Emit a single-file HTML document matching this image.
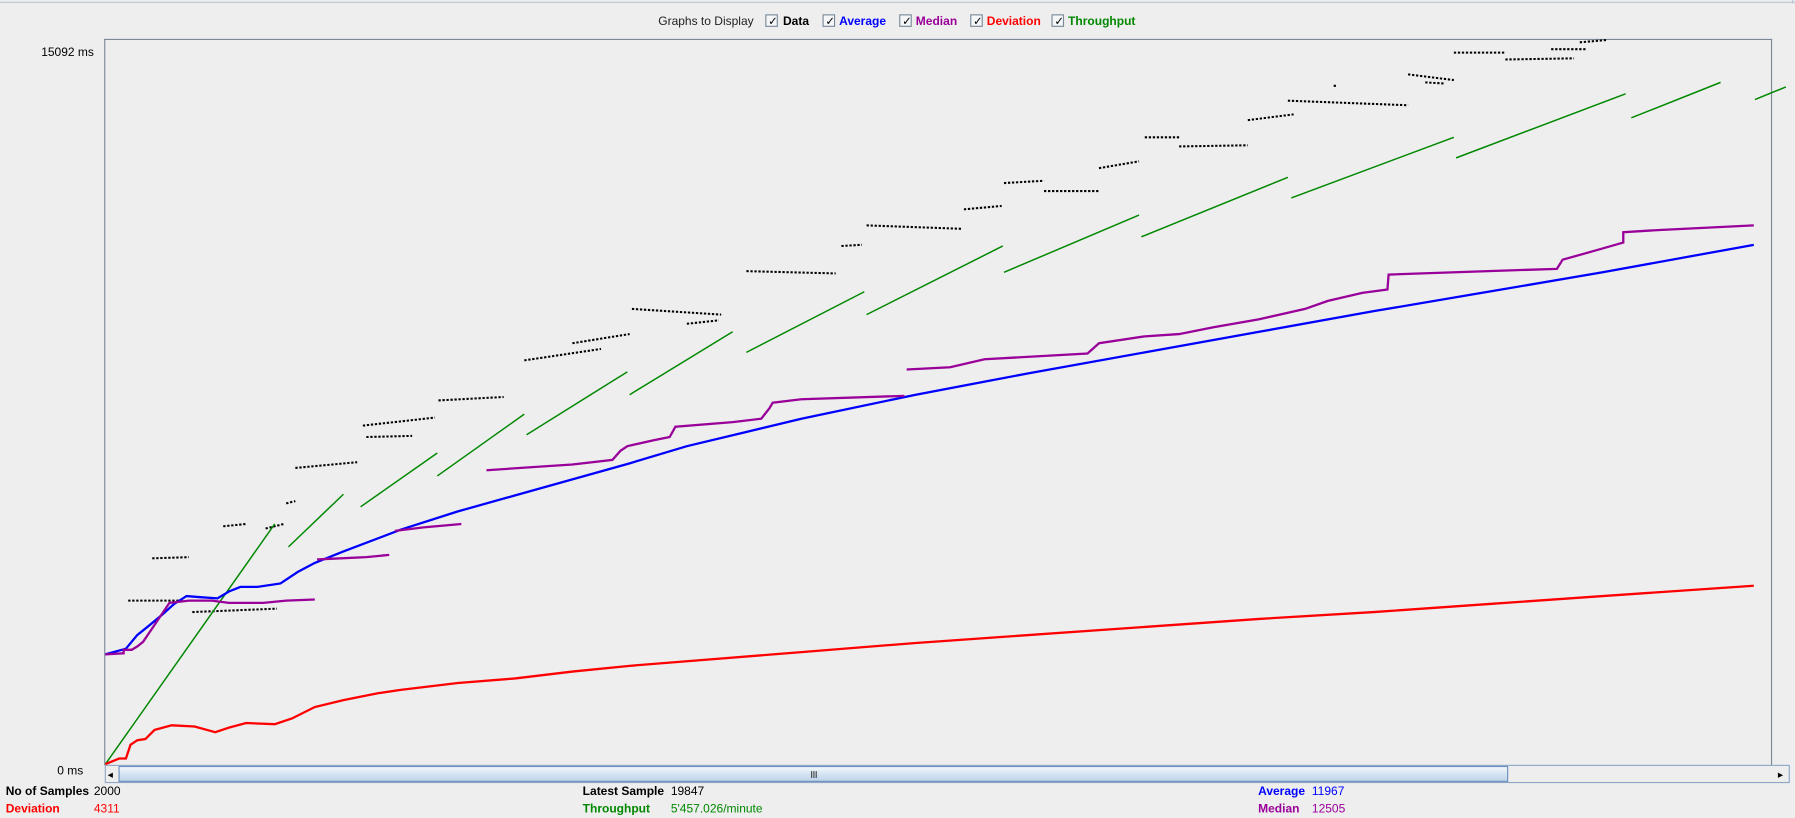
<!DOCTYPE html>
<html><head><meta charset="utf-8"><style>
html,body{margin:0;padding:0;background:#eeeeee;width:1795px;height:818px;overflow:hidden}
svg{display:block}
text{font-family:"Liberation Sans",sans-serif;font-size:10.5px}
</style></head><body>
<svg width="1795" height="818" viewBox="0 0 1568 715" preserveAspectRatio="none">
<defs><linearGradient id="sb" x1="0" y1="0" x2="0" y2="1"><stop offset="0" stop-color="#f4f8fc"/><stop offset="0.5" stop-color="#d6e4f2"/><stop offset="1" stop-color="#bcd2e8"/></linearGradient></defs>
<rect x="0" y="0" width="1568" height="715" fill="#eeeeee"/>
<line x1="0" y1="2" x2="1568" y2="2" stroke="#b8c4d0"/>
<line x1="1566" y1="0" x2="1566" y2="3" stroke="#b8c4d0"/>
<text x="575" y="22" fill="#222">Graphs to Display</text>
<g stroke="#7a8a99" fill="#f4f6f8"><rect x="669" y="13" width="10" height="10"/><rect x="719" y="13" width="10" height="10"/><rect x="786" y="13" width="10" height="10"/><rect x="848" y="13" width="10" height="10"/><rect x="919" y="13" width="10" height="10"/></g>
<g fill="#000"><text x="671" y="22" style="font-size:10px">✓</text><text x="721" y="22" style="font-size:10px">✓</text><text x="788" y="22" style="font-size:10px">✓</text><text x="850" y="22" style="font-size:10px">✓</text><text x="921" y="22" style="font-size:10px">✓</text></g>
<text x="684" y="22" fill="#000" style="font-weight:bold">Data</text>
<text x="733" y="22" fill="#0000ff" style="font-weight:bold">Average</text>
<text x="800" y="22" fill="#990099" style="font-weight:bold">Median</text>
<text x="862" y="22" fill="#ff0000" style="font-weight:bold">Deviation</text>
<text x="933" y="22" fill="#008800" style="font-weight:bold">Throughput</text>
<line x1="91.5" y1="34" x2="91.5" y2="669" stroke="#7a8898"/>
<line x1="91" y1="34.5" x2="1548" y2="34.5" stroke="#7a8898"/>
<line x1="1547.5" y1="34" x2="1547.5" y2="669" stroke="#7a8898"/>
<text x="36" y="49" fill="#000">15092  ms</text>
<text x="50" y="677" fill="#000">0  ms</text>
<g stroke="#000" stroke-width="1.8" stroke-dasharray="2 1.5" fill="none">
<path d="M112 525L160 525M133 488L165 487M168 535L242 532M195 460L215 458M232 462L248 458M250 440L258 438M258 409L312 404M317 372L380 365M320 382L360 381M383 350L440 347M458 315L525 305M500 300L550 292M552 270L630 275M600 283L628 280M652 237L730 239M735 215L753 214M757 197L840 200M842 183L875 180M877 160L912 158M912 167L960 167M960 147L995 141M1000 120L1030 120M1030 128L1090 127M1090 105L1130 100M1125 88L1230 92M1165 75L1168 75M1230 65L1270 70M1245 72L1262 73M1270 46L1315 46M1315 52L1375 51M1355 43L1385 43M1380 37L1403 35"/>
</g>
<g stroke="#008800" stroke-width="1.3" fill="none">
<path d="M92 668L240 458M252 478L300 432M315 443L382 396M382 416L458 362M460 380L548 325M550 345L640 290M652 308L755 255M757 275L876 215M877 238L995 188M997 207L1125 155M1128 173L1270 120M1272 138L1420 82M1425 103L1503 72M1533 87L1560 76"/>
</g>
<polyline fill="none" stroke="#ff0000" stroke-width="2" points="92,668 104,663 110,663 114,651 120,647 127,646 135,638 150,634 170,635 188,640 200,636 215,632 240,633 255,628 275,618 300,612 330,606 350,603 400,597 450,593 500,587 550,582 600,578 700,570 800,562 900,555 1000,548 1100,541 1200,535 1300,528 1400,521 1532,512"/>
<polyline fill="none" stroke="#0000ff" stroke-width="2" points="92,572 110,567 120,555 130,547 142,537 152,528 163,521 175,522 190,523 200,517 210,513 225,513 245,510 260,500 275,492 300,482 350,463 400,447 450,433 500,419 550,405 600,390 650,378 700,366 800,345 900,326 1000,308 1100,290 1200,272 1300,255 1400,238 1532,214"/>
<polyline fill="none" stroke="#990099" stroke-width="2" points="92,572 108,571 108,568 115,568 120,565 125,561 148,527 165,525 185,525 200,527 230,527 250,525 275,524"/>
<polyline fill="none" stroke="#990099" stroke-width="2" points="277,489 320,487 340,485"/>
<polyline fill="none" stroke="#990099" stroke-width="2" points="345,464 370,461 403,458"/>
<polyline fill="none" stroke="#990099" stroke-width="2" points="425,411 470,408 500,406 535,402 542,394 548,390 570,385 585,382 590,373 640,369 665,366 672,357 675,352 700,349 790,346"/>
<polyline fill="none" stroke="#990099" stroke-width="2" points="792,323 830,321 860,314 950,309 960,300 1000,294 1030,292 1060,286 1100,279 1140,270 1160,263 1190,256 1212,253 1213,240 1300,237 1360,235 1365,227 1390,220 1418,212 1418,203 1450,201 1532,197"/>
<rect x="92" y="669" width="1471" height="15" fill="#eeeeee" stroke="#8fa8c8"/>
<text x="94" y="680" fill="#000" style="font-size:9px">◂</text>
<rect x="104" y="670" width="1213" height="13" fill="url(#sb)" stroke="#6d8fbf"/>
<line x1="709" y1="674" x2="709" y2="680" stroke="#444"/><line x1="711" y1="674" x2="711" y2="680" stroke="#444"/><line x1="713" y1="674" x2="713" y2="680" stroke="#444"/>
<text x="1553" y="680" fill="#000" style="font-size:9px">▸</text>
<text x="5" y="695" fill="#000" style="font-weight:bold">No of Samples</text><text x="82" y="695" fill="#000">2000</text>
<text x="5" y="710" fill="#ff0000" style="font-weight:bold">Deviation</text><text x="82" y="710" fill="#ff0000">4311</text>
<text x="509" y="695" fill="#000" style="font-weight:bold">Latest Sample</text><text x="586" y="695" fill="#000">19847</text>
<text x="509" y="710" fill="#008800" style="font-weight:bold">Throughput</text><text x="586" y="710" fill="#008800">5'457.026/minute</text>
<text x="1099" y="695" fill="#0000ff" style="font-weight:bold">Average</text><text x="1146" y="695" fill="#0000ff">11967</text>
<text x="1099" y="710" fill="#990099" style="font-weight:bold">Median</text><text x="1146" y="710" fill="#990099">12505</text>
</svg>
</body></html>
